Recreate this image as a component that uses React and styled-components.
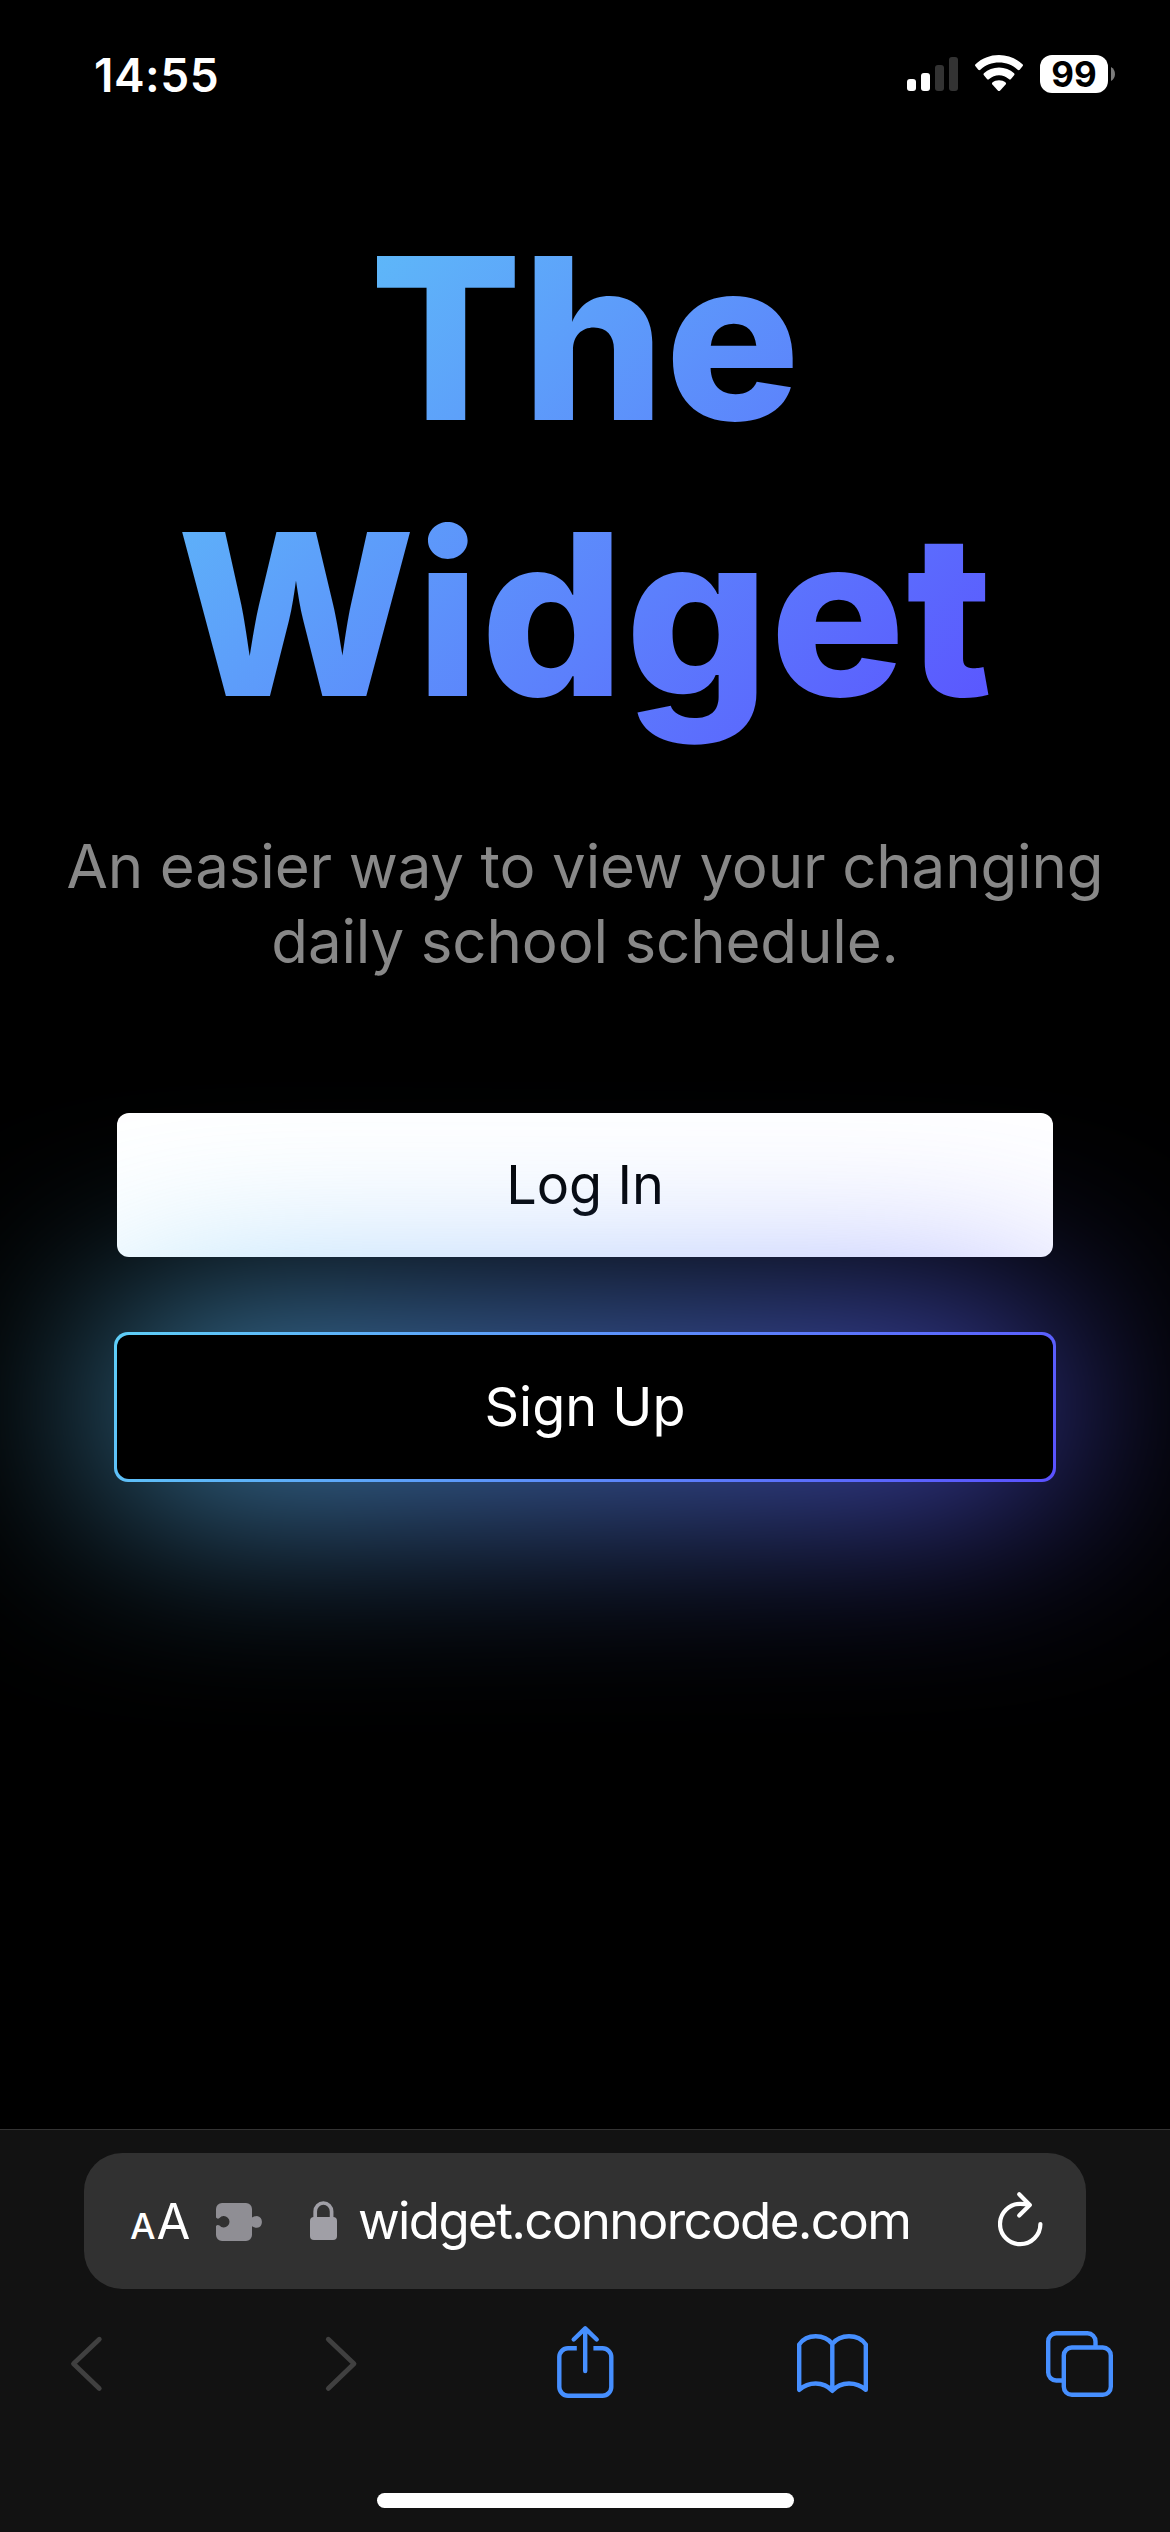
import React from "react";
import styled, { createGlobalStyle } from "styled-components";

const Global = createGlobalStyle`
  *, *::before, *::after { box-sizing: border-box; }
  html, body { margin: 0; background: #000; }
`;

const Phone = styled.div`
  width: 1170px;
  height: 2532px;
  display: flex;
  flex-direction: column;
  overflow: hidden;
  background: #000;
  color: #fff;
  font-family: Inter, "Liberation Sans", sans-serif;
`;

const StatusBar = styled.header`
  height: 141px;
  flex: none;
  display: flex;
  justify-content: space-between;
  align-items: flex-start;
  padding: 48px 55px 0 94px;
`;

const Clock = styled.time`
  font-size: 46px;
  line-height: 54px;
  font-weight: 600;
  letter-spacing: 0.5px;
`;

const StatusIcons = styled.div`
  display: flex;
  align-items: flex-start;
  padding-top: 7px;
`;

const Signal = styled.svg`
  width: 51px;
  height: 36px;
  margin-right: 17px;
`;

const Wifi = styled.svg`
  width: 48px;
  height: 36px;
  margin-right: 17px;
`;

const Battery = styled.div`
  width: 68px;
  height: 38px;
  border-radius: 12px;
  background: #fff;
  color: #000;
  font-size: 35px;
  line-height: 38px;
  font-weight: 700;
  text-align: center;
`;

const BatteryTip = styled.svg`
  width: 4px;
  height: 14px;
  margin: 12px 0 0 3px;
`;

const Main = styled.main`
  flex: 1;
  display: flex;
  flex-direction: column;
  align-items: center;
  padding-top: 59px;
`;

const Title = styled.h1`
  margin: 0;
  width: 936px;
  font-size: 225px;
  line-height: 276px;
  font-weight: 800;
  text-align: center;
  color: transparent;
  background: linear-gradient(135deg, #5fd3f7, #5a4dff);
  -webkit-background-clip: text;
  background-clip: text;
`;

const Spaced = styled.span`
  letter-spacing: 1px;
`;

const Tagline = styled.p`
  margin: 77px 0 0;
  font-size: 60px;
  line-height: 75px;
  letter-spacing: -0.15px;
  text-align: center;
  color: #888;
`;

const Actions = styled.div`
  display: flex;
  flex-direction: column;
  align-items: center;
  gap: 75px;
  margin-top: 134px;
`;

const LogInButton = styled.button`
  width: 936px;
  height: 144px;
  border: 0;
  border-radius: 12px;
  background: #fff;
  color: #000;
  font: 400 54px/1 Inter, "Liberation Sans", sans-serif;
`;

const SignUpFrame = styled.div`
  position: relative;
  isolation: isolate;
  padding: 3px;
  border-radius: 14px;
  background: linear-gradient(135deg, #5fd3f7, #5a4dff);

  &::before {
    content: "";
    position: absolute;
    inset: 0;
    z-index: -1;
    background: inherit;
    filter: blur(105px);
  }
`;

const SignUpButton = styled(LogInButton)`
  display: block;
  background: #000;
  color: #fff;
`;

const Browser = styled.footer`
  height: 403px;
  flex: none;
  display: flex;
  flex-direction: column;
  align-items: center;
  border-top: 1px solid #333;
  background: #121212;
  position: relative;
`;

const AddressBar = styled.div`
  width: 1002px;
  height: 136px;
  margin-top: 23px;
  padding: 0 43px 0 46px;
  border-radius: 38px;
  background: #313131;
  display: flex;
  align-items: center;
`;

const TextSize = styled.span`
  display: flex;
  align-items: baseline;
  gap: 1px;
  width: 86px;
  padding-top: 5px;
  line-height: 62px;
`;

const Letter = styled.span`
  font-size: ${(p) => p.$size}px;
  font-weight: ${(p) => p.$weight};
`;

const BarIcon = styled.svg`
  width: ${(p) => p.$w}px;
  height: 60px;
  margin-right: ${(p) => p.$gap || 0}px;
  flex: none;
`;

const Url = styled.span`
  flex: 1;
  font-size: 51px;
  line-height: 62px;
  letter-spacing: -1.62px;
  white-space: nowrap;
`;

const Toolbar = styled.nav`
  width: 100%;
  display: flex;
  justify-content: space-between;
  margin-top: 35px;
  padding: 0 55px 0 51px;
`;

const ToolIcon = styled.svg`
  width: 72px;
  height: 80px;
  fill: none;
  stroke: ${(p) => (p.$off ? "#404040" : "#468fff")};
  stroke-width: ${(p) => (p.$off ? 4.8 : 4.4)};
  stroke-linecap: round;
  stroke-linejoin: round;
`;

const HomeIndicator = styled.div`
  width: 417px;
  height: 15px;
  margin-top: 89px;
  border-radius: 8px;
  background: #fff;
`;

export default function App() {
  return (
    <Phone>
      <Global />
      <StatusBar>
        <Clock>14:55</Clock>
        <StatusIcons>
          <Signal viewBox="0 0 51 36">
            <rect x="0" y="24" width="9" height="12" rx="3" fill="#fff" />
            <rect x="14" y="18" width="9" height="18" rx="3" fill="#fff" />
            <rect x="28" y="10" width="9" height="26" rx="3" fill="#333" />
            <rect x="42" y="2" width="9" height="34" rx="3" fill="#333" />
          </Signal>
          <Wifi viewBox="0 0 48 36" fill="#fff">
            <path d="M24 0C33 0 41.300 3.400 47.500 9.200Q48.500 10.200 47.500 11.200L44.700 14.700Q43.700 15.600 42.600 14.700C37.500 10 31 7.500 24 7.500S10.500 10 5.400 14.700Q4.300 15.600 3.300 14.700L.5 11.200Q-.5 10.200 .5 9.200C6.700 3.400 15 0 24 0Z" />
            <path d="M24 12.500C29.800 12.500 35 14.700 39.100 18.300Q40.100 19.300 39.100 20.300L36 24Q35 25 33.800 24C31.100 21.700 27.700 20.200 24 20.200S16.900 21.700 14.200 24Q13 25 12 24L8.900 20.300Q7.900 19.300 8.900 18.300C13 14.700 18.200 12.500 24 12.500Z" />
            <path d="M24 25.200C26.500 25.200 28.800 26.100 30.600 27.500Q31.500 28.400 30.600 29.400L25.200 35.400Q24 36.500 22.800 35.400L17.400 29.400Q16.500 28.400 17.400 27.500C19.200 26.100 21.500 25.200 24 25.200Z" />
          </Wifi>
          <Battery>99</Battery>
          <BatteryTip viewBox="0 0 4 14">
            <path d="M0 0C5.300 2.500 5.300 11.500 0 14Z" fill="#7b7b7b" />
          </BatteryTip>
        </StatusIcons>
      </StatusBar>
      <Main>
        <Title>
          The
          <br />
          <Spaced>Widget</Spaced>
        </Title>
        <Tagline>
          An easier way to view your changing
          <br />
          daily school schedule.
        </Tagline>
        <Actions>
          <LogInButton>Log In</LogInButton>
          <SignUpFrame>
            <SignUpButton>Sign Up</SignUpButton>
          </SignUpFrame>
        </Actions>
      </Main>
      <Browser>
        <AddressBar>
          <TextSize>
            <Letter $size={36} $weight={500}>A</Letter>
            <Letter $size={49} $weight={400}>A</Letter>
          </TextSize>
          <BarIcon $w={48} $gap={46} viewBox="216 2191 48 60" fill="#8f8e94">
            <path d="M222 2203H246A6 6 0 0 1 252 2209V2217.500Q254.500 2216 257 2216A6 6 0 0 1 257 2227.800Q254.500 2227.800 252 2226.300V2235A6 6 0 0 1 246 2241H222A6 6 0 0 1 216 2235V2226Q217.500 2224.300 219.500 2225.500A5.700 5.700 0 1 0 219.500 2218Q217.500 2219.500 216 2217.500V2209A6 6 0 0 1 222 2203Z" />
          </BarIcon>
          <BarIcon $w={27} $gap={21} viewBox="310 2191 27 60" fill="#a09fa6">
            <rect x="310" y="2217" width="27" height="23" rx="4" />
            <path d="M315.200 2219V2211.500A8.200 8.500 0 0 1 331.600 2211.500V2219" fill="none" stroke="#a09fa6" strokeWidth="3.700" />
          </BarIcon>
          <Url>widget.connorcode.com</Url>
          <BarIcon $w={45} viewBox="998 2191 45 60" fill="none" stroke="#fff" strokeWidth="4.200" strokeLinecap="round" strokeLinejoin="round">
            <path d="M1040.400 2224A20.200 20.200 0 1 1 1020.200 2203.800Q1025 2203.800 1029.500 2205" />
            <path d="M1019.200 2194.300L1029.800 2204.900L1019.200 2215.400" />
          </BarIcon>
        </AddressBar>
        <Toolbar>
          <ToolIcon $off viewBox="51 2324 72 80">
            <path d="M99.300 2339.200L73.500 2363.800L99.300 2388.400" />
          </ToolIcon>
          <ToolIcon $off viewBox="299 2324 72 80">
            <path d="M328.300 2339.200L354 2363.800L328.300 2388.400" />
          </ToolIcon>
          <ToolIcon viewBox="547 2324 72 80">
            <path d="M576.800 2348.300H568A8.800 8.800 0 0 0 559.300 2357V2387A8.800 8.800 0 0 0 568 2395.700H602.500A8.800 8.800 0 0 0 611.300 2387V2357A8.800 8.800 0 0 0 602.500 2348.300H593.400" strokeLinecap="butt" />
            <path d="M585.200 2371V2328.700M573.700 2339.500L585.200 2328.300L596.700 2339.500" />
          </ToolIcon>
          <ToolIcon viewBox="795 2324 72 80" overflow="visible">
            <path d="M799.200 2389.800V2344.500C803 2339 809 2336.300 815.700 2336.300S828.500 2339 832.300 2344C836.200 2339 842.300 2336.300 849 2336.300S862 2339 865.800 2344.500V2389.800C861.500 2386 855.500 2383.500 849 2383.500S836.500 2386 832.300 2390.800C828 2386 822.200 2383.500 815.700 2383.500S803.500 2386 799.200 2389.800ZM832.300 2344V2390.500" />
          </ToolIcon>
          <ToolIcon viewBox="1043 2324 72 80">
            <path d="M1095.500 2346V2341.400A8 8 0 0 0 1087.500 2333.300H1056.200A8 8 0 0 0 1048.200 2341.400V2372.500A8 8 0 0 0 1056.200 2380.500H1063" strokeLinecap="butt" />
            <rect x="1063.800" y="2347.500" width="47" height="47.300" rx="8" />
          </ToolIcon>
        </Toolbar>
        <HomeIndicator />
      </Browser>
    </Phone>
  );
}
